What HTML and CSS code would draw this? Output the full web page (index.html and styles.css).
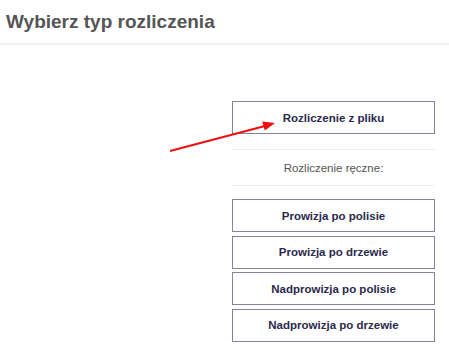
FILE: index.html
```html
<!DOCTYPE html>
<html lang="pl">
<head>
    <meta charset="UTF-8">
    <meta name="viewport" content="width=device-width, initial-scale=1.0">
    <title>Wybierz typ rozliczenia</title>
    <link rel="stylesheet" href="styles.css">
</head>
<body>
    <div class="header">
        <h3 class="title">Wybierz typ rozliczenia</h3>
    </div>
    <div class="content">
        <svg class="arrow" width="120" height="40" viewBox="0 0 120 40">
            <line x1="4" y1="36" x2="99" y2="11" stroke="#f20d0d" stroke-width="2"/>
            <polygon points="109,8 96.2,6.5 98.8,15.6" fill="#f20d0d"/>
        </svg>
        <div class="options">
            <button class="option">Rozliczenie z pliku</button>
            <div class="manual">Rozliczenie ręczne:</div>
            <div class="list">
                <button class="option">Prowizja po polisie</button>
                <button class="option">Prowizja po drzewie</button>
                <button class="option">Nadprowizja po polisie</button>
                <button class="option">Nadprowizja po drzewie</button>
            </div>
        </div>
    </div>
</body>
</html>
```

FILE: styles.css
```css
body {
    margin: 0;
    background-color: #fff;
    font-family: 'Liberation Sans', Arial, sans-serif;
}
.header {
    height: 43px;
    border-bottom: 2px solid #f0f0f3;
    padding-left: 6px;
    display: flex;
    align-items: center;
}
.title {
    margin: 0;
    font-size: 19px;
    font-weight: bold;
    color: #555;
}
.content {
    position: relative;
    display: flex;
    justify-content: flex-end;
    padding: 56px 14px 0 0;
}
.options {
    width: 203px;
}
.option {
    display: block;
    width: 100%;
    height: 33px;
    background: #fff;
    border: 1px solid #85829f;
    color: #2b2a4c;
    font-family: 'Liberation Sans', Arial, sans-serif;
    font-size: 11.5px;
    font-weight: bold;
    cursor: pointer;
}
.manual {
    margin: 15px 0 13px;
    height: 35px;
    border-top: 1px solid #eeeef0;
    border-bottom: 1px solid #eeeef0;
    display: flex;
    align-items: center;
    justify-content: center;
    font-size: 11.5px;
    color: #555;
}
.list {
    display: flex;
    flex-direction: column;
    gap: 3.5px;
}
.arrow {
    position: absolute;
    left: 166px;
    top: 70px;
}
```
